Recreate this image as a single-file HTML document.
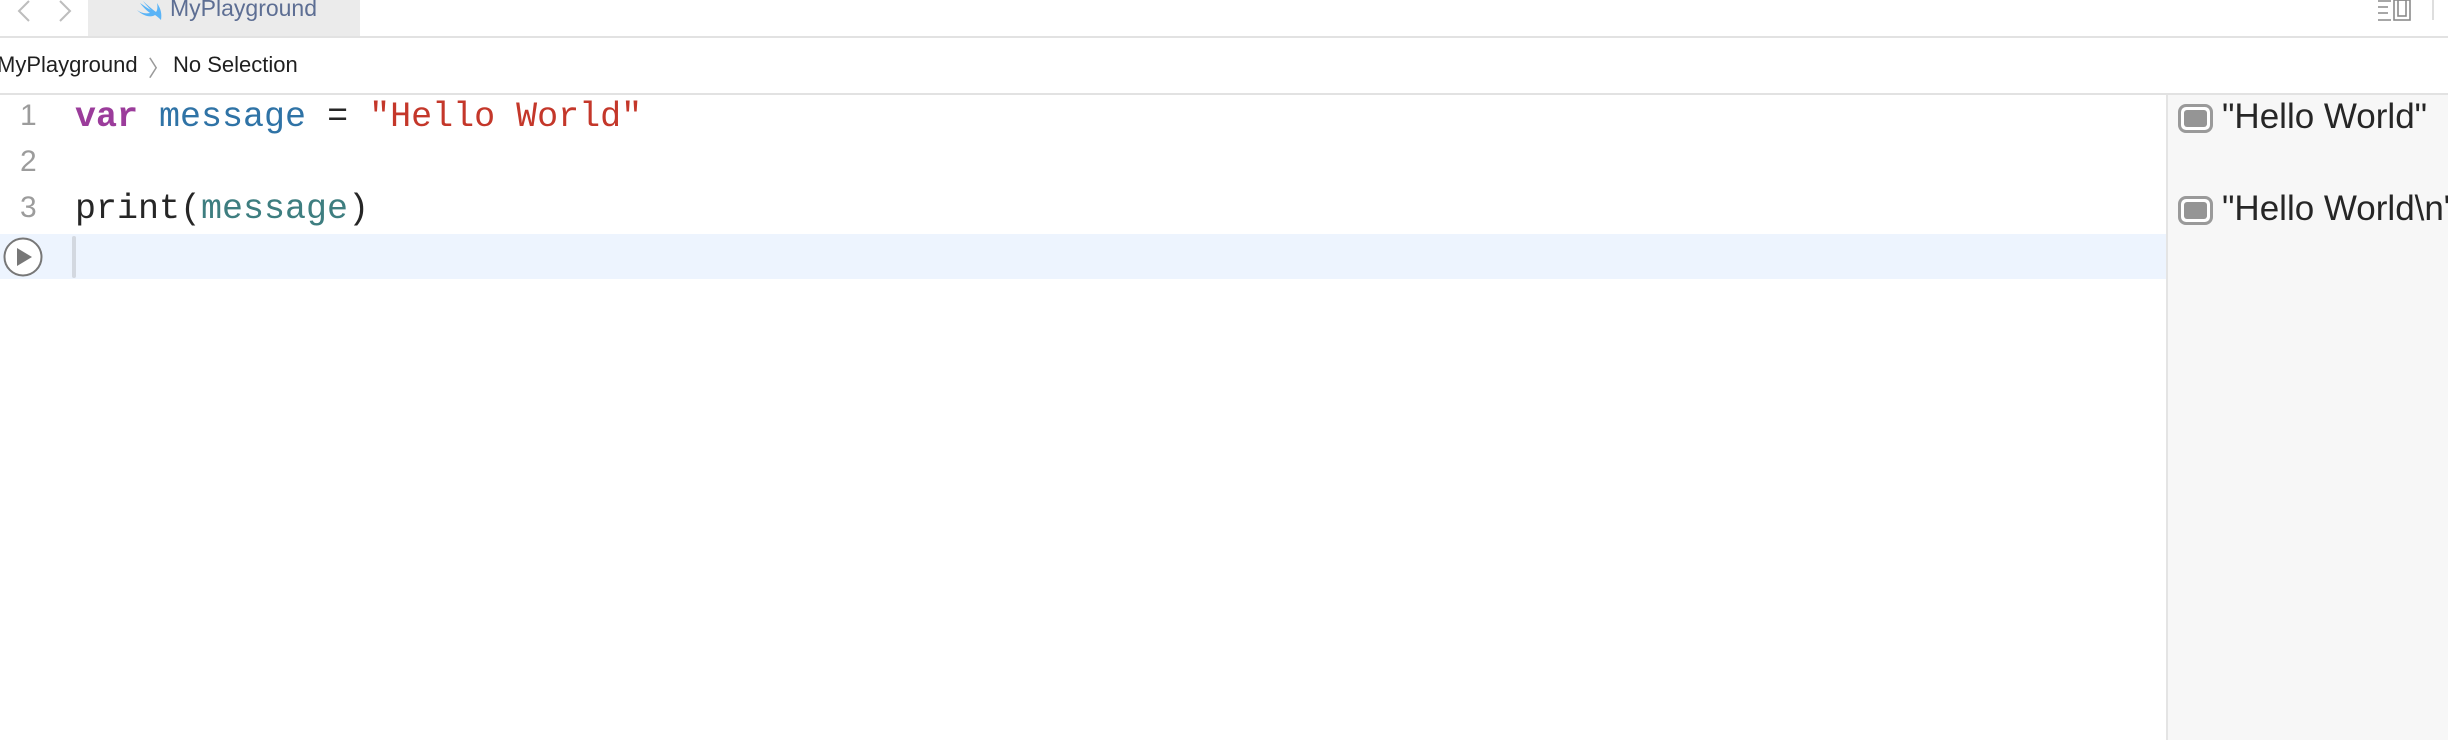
<!DOCTYPE html>
<html><head><meta charset="utf-8"><style>
*{margin:0;padding:0;box-sizing:border-box}
body{width:2448px;height:740px;background:#fff;position:relative;overflow:hidden;font-family:"Liberation Sans",sans-serif}
.abs{position:absolute}
.mono{font-family:"Liberation Mono",monospace;font-size:35px;white-space:pre;color:#262626}
.ln{font-family:"Liberation Sans",sans-serif;font-size:30px;color:#9c9c9c;left:20px}
.res{font-size:35px;color:#262626;left:2222px;white-space:pre}
.box{left:2178px;width:35px;height:29px;border:3px solid #9a9a9a;border-radius:8px;background:#fff}
.box::after{content:"";position:absolute;left:3px;top:3px;right:3px;bottom:3px;background:#959595;border-radius:3px}
</style></head><body>
<div class="abs" style="left:88px;top:0;width:272px;height:36px;background:#ebebeb"></div>
<div class="abs" style="left:0;top:36px;width:2448px;height:2px;background:#e2e2e2"></div>
<svg class="abs" style="left:2px;top:0" width="80" height="26" viewBox="0 0 80 26">
<path d="M27 1 L17 11 L27 21" stroke="#bdbdbd" stroke-width="2" fill="none"/>
<path d="M58 1 L68 11 L58 21" stroke="#bdbdbd" stroke-width="2" fill="none"/>
</svg>
<svg class="abs" style="left:135px;top:0" width="28" height="22" viewBox="0 0 28 22">
<path d="M2 10 C8 16 16 18 20 15 C23 17 25 19 26 20 C27 14 26 9 22 3 C23 8 22 11 21 12 C17 9 12 5 8 1 C11 5 14 8 16 10 C12 8 8 5 5 3 C8 7 12 11 15 13 C10 14 6 13 2 10Z" fill="#5ab4f7"/>
</svg>
<div class="abs" style="left:170px;top:-5px;font-size:23px;color:#5d6e93">MyPlayground</div>
<svg class="abs" style="left:2376px;top:0" width="60" height="24" viewBox="0 0 60 24">
<g stroke="#8a8a8a" stroke-width="1.6" fill="none">
<path d="M2 1H15M2 7H12M2 13H12M2 20H15"/>
<rect x="18" y="0" width="16" height="20"/><rect x="22" y="0" width="8" height="16"/>
<path d="M57 0V20" stroke="#d5d5d5"/>
</g></svg>
<div class="abs" style="left:-3px;top:52px;font-size:22px;color:#1f1f1f;white-space:pre">MyPlayground</div>
<div class="abs" style="left:148px;top:51px;font-size:22px;color:#9a9a9a">〉</div>
<div class="abs" style="left:173px;top:52px;font-size:22px;color:#1f1f1f">No Selection</div>
<div class="abs" style="left:0;top:93px;width:2448px;height:2px;background:#e2e2e2"></div>
<div class="abs" style="left:0;top:234px;width:2166px;height:45px;background:#edf4fe"></div>
<div class="abs ln" style="top:99px">1</div>
<div class="abs ln" style="top:145px">2</div>
<div class="abs ln" style="top:191px">3</div>
<div class="abs mono" style="left:75px;top:97px"><span style="color:#9b3c9b;font-weight:bold">var</span> <span style="color:#2f73a6">message</span> = <span style="color:#c4372a">"Hello World"</span></div>
<div class="abs mono" style="left:75px;top:189px">print(<span style="color:#3e7e80">message</span>)</div>
<svg class="abs" style="left:3px;top:237px" width="40" height="40" viewBox="0 0 40 40">
<circle cx="20" cy="20" r="18.5" fill="#fff" stroke="#777" stroke-width="2"/>
<path d="M14 11 L29 20 L14 29Z" fill="#777"/>
</svg>
<div class="abs" style="left:72px;top:236px;width:4px;height:42px;background:#d3d8e0;border-radius:2px"></div>
<div class="abs" style="left:2166px;top:95px;width:282px;height:645px;background:#f7f7f7;border-left:2px solid #e4e4e4"></div>
<div class="abs box" style="top:104px"></div>
<div class="abs res" style="top:97px">"Hello World"</div>
<div class="abs box" style="top:196px"></div>
<div class="abs res" style="top:189px">"Hello World\n"</div>
</body></html>
